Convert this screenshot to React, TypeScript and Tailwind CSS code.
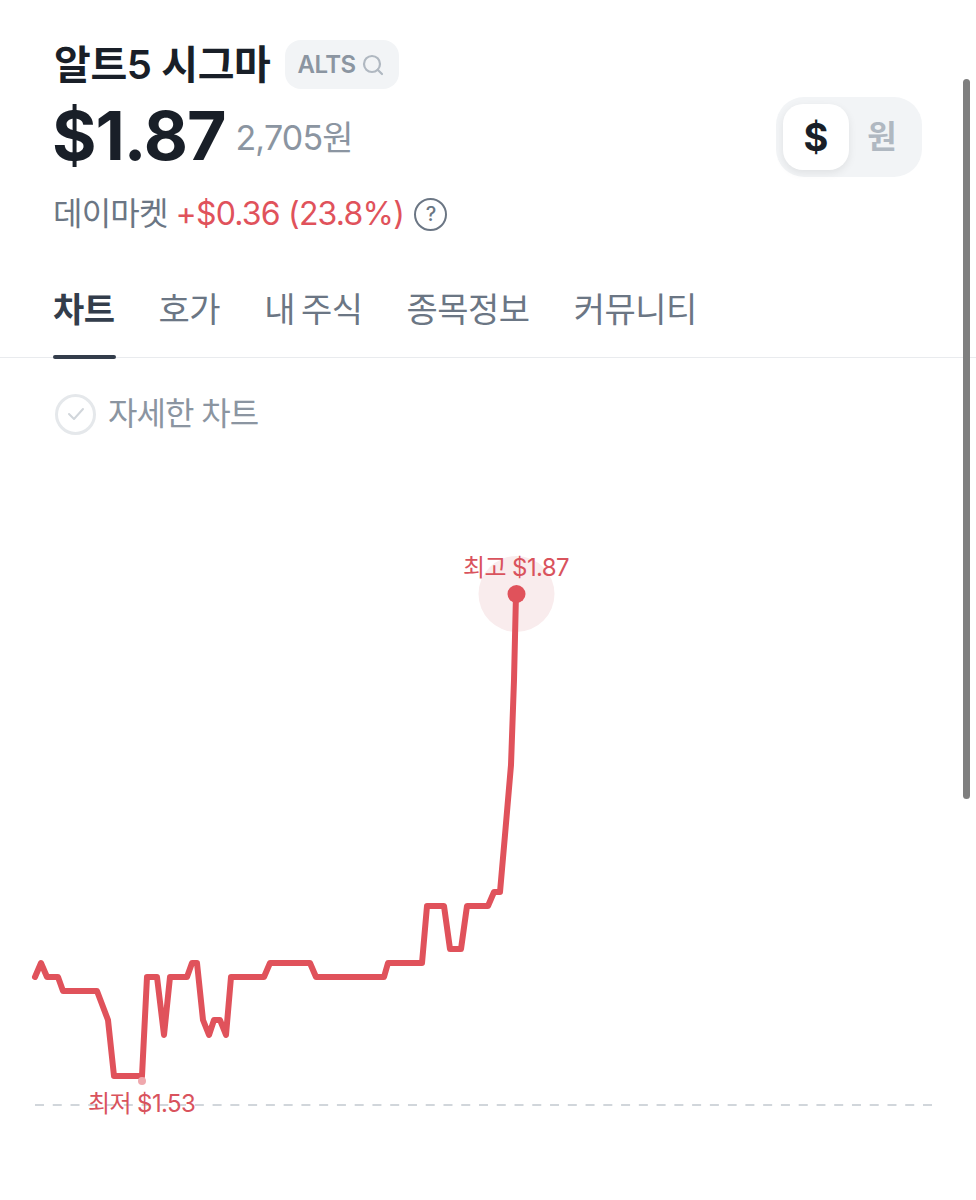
import { Search } from "lucide-react";

const tabs = ["차트", "호가", "내 주식", "종목정보", "커뮤니티"];

const linePoints =
  "35,977 41,963 47,977 58,977 63,991 97,991 108,1020 114,1076 142,1076 147,977 157,977 164,1035 170,977 187,977 192,963 197,963 203,1020 209,1035 214,1020 220,1020 226,1035 231,977 264,977 270,963 310,963 316,977 384,977 388,963 422,963 427,906 444,906 450,949 461,949 467,906 488,906 494,892 500,892 505,835 511,765 514,680 516,594";

export default function App() {
  return (
    <div
      className="relative h-[1200px] w-[976px] overflow-hidden bg-white"
      style={{ fontFamily: '"Inter", "Noto Sans CJK KR", sans-serif' }}
    >
      {/* Header */}
      <header className="flex items-start justify-between pl-[54px] pr-[54px] pt-[40px]">
        <div>
          <div className="flex h-[49px] items-center gap-[15px]">
            <h1 className="text-[40px] font-semibold tracking-[-0.4px] text-[#191f28]">알트5 시그마</h1>
            <span className="flex h-[49px] items-center gap-[5px] rounded-[16px] bg-[#f2f4f6] pl-[12px] pr-[14px] text-[24px] font-semibold tracking-[-0.5px] text-[#8b95a1]">
              ALTS
              <Search className="h-[24px] w-[24px] text-[#b0b8c1]" strokeWidth={2.2} />
            </span>
          </div>
          <div className="mt-[10px] flex h-[72px] items-center gap-[10px]">
            <span className="ml-[-2px] text-[68px] font-bold tracking-[-1px] text-[#191f28]">$1.87</span>
            <span className="mt-[4px] text-[34px] tracking-[-0.8px] text-[#8b95a1]">2,705원</span>
          </div>
          <div className="mt-[21px] flex h-[44px] items-center text-[32px] tracking-[-0.8px]">
            <span className="ml-[-1px] text-[#6b7684]">데이마켓</span>
            <span className="ml-[8px] text-[#e0525b]">+$0.36 (23.8%)</span>
            <span className="ml-[10px] flex h-[33px] w-[33px] items-center justify-center rounded-full border-2 border-[#6b7684] text-[20px] font-medium text-[#6b7684]">
              ?
            </span>
          </div>
        </div>
        {/* Currency toggle */}
        <div className="mt-[57px] flex h-[80px] w-[146px] items-center rounded-[28px] bg-[#f2f4f6] p-[7px]">
          <span className="flex h-[66px] w-[66px] items-center justify-center rounded-[20px] bg-white text-[38px] font-bold text-[#191f28] shadow-[0_3px_8px_rgba(0,0,0,0.08)]">
            $
          </span>
          <span className="flex-1 text-center text-[32px] font-semibold text-[#b0b8c1]">원</span>
        </div>
      </header>

      {/* Tabs */}
      <nav className="mt-[37px] flex h-[85px] gap-[44px] border-b border-[#e9ebee] pl-[53px]">
        {tabs.map((tab, i) => (
          <div key={tab} className="relative flex h-[85px] items-start pt-[11px]">
            <span
              className={
                i === 0
                  ? "text-[34px] font-bold tracking-[-0.5px] text-[#333d4b]"
                  : "text-[34px] font-normal tracking-[-0.5px] [word-spacing:-3px] text-[#6b7684]"
              }
            >
              {tab}
            </span>
            {i === 0 && (
              <span className="absolute bottom-[-1px] left-0 right-[-1px] h-[4px] rounded-full bg-[#333d4b]" />
            )}
          </div>
        ))}
      </nav>

      {/* Detail chart check */}
      <div className="mt-[32px] flex items-center gap-[12px] pl-[55px]">
        <span className="flex h-[41px] w-[41px] items-center justify-center rounded-full border-[3px] border-[#e5e8eb]">
          <svg width="20" height="16" viewBox="0 0 20 16" fill="none">
            <path d="M3 8l5 5 9-10" stroke="#d1d6db" strokeWidth="2" strokeLinecap="round" strokeLinejoin="round" />
          </svg>
        </span>
        <span className="text-[32px] tracking-[-1px] text-[#8b95a1]">자세한 차트</span>
      </div>

      {/* Chart */}
      <div className="absolute inset-x-0 bottom-0 h-[750px]">
        <svg className="block h-[750px] w-[976px]" viewBox="0 450 976 750" fill="none">
          <line x1="35" y1="1105" x2="932" y2="1105" stroke="#d1d6db" strokeWidth="2" strokeDasharray="9 8.76" />
          <circle cx="516.5" cy="594" r="38" fill="#f9eced" />
          <polyline points={linePoints} stroke="#e0525b" strokeWidth="6" strokeLinejoin="round" strokeLinecap="round" />
          <circle cx="516.5" cy="594" r="9" fill="#e0525b" />
          <circle cx="142" cy="1081" r="4" fill="#efa8ad" />
        </svg>
        <span className="absolute left-[463px] top-[103px] text-[24px] leading-[30px] tracking-[-0.6px] text-[#d9535d]">
          최고 $1.87
        </span>
        <span className="absolute left-[88px] top-[639px] text-[24px] leading-[30px] tracking-[-0.6px] text-[#d9535d]">
          최저 $1.53
        </span>
      </div>

      {/* Scrollbar */}
      <div className="absolute left-[963px] top-[79px] h-[720px] w-[7px] rounded-full bg-[#7f7f7f]" />
    </div>
  );
}
